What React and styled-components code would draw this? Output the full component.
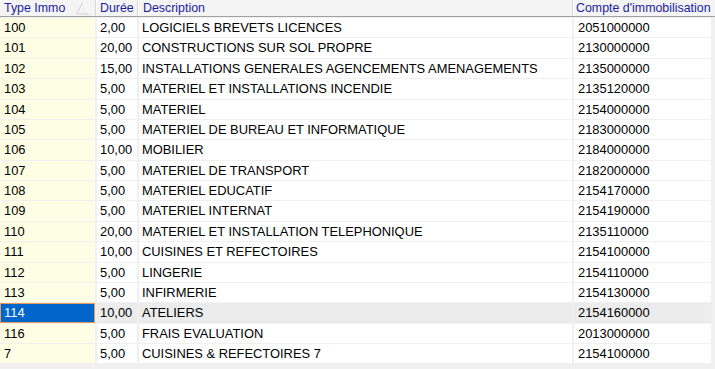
import React from "react";
import styled, { createGlobalStyle } from "styled-components";

const Global = createGlobalStyle`
  html, body { margin: 0; padding: 0; background: #f0f0f0; overflow: hidden; }
  body { font-family: "Liberation Sans", Arial, sans-serif; }
`;

const rows = [
  ["100", "2,00", "LOGICIELS BREVETS LICENCES", "2051000000"],
  ["101", "20,00", "CONSTRUCTIONS SUR SOL PROPRE", "2130000000"],
  ["102", "15,00", "INSTALLATIONS GENERALES AGENCEMENTS AMENAGEMENTS", "2135000000"],
  ["103", "5,00", "MATERIEL ET INSTALLATIONS INCENDIE", "2135120000"],
  ["104", "5,00", "MATERIEL", "2154000000"],
  ["105", "5,00", "MATERIEL DE BUREAU ET INFORMATIQUE", "2183000000"],
  ["106", "10,00", "MOBILIER", "2184000000"],
  ["107", "5,00", "MATERIEL DE TRANSPORT", "2182000000"],
  ["108", "5,00", "MATERIEL EDUCATIF", "2154170000"],
  ["109", "5,00", "MATERIEL INTERNAT", "2154190000"],
  ["110", "20,00", "MATERIEL ET INSTALLATION TELEPHONIQUE", "2135110000"],
  ["111", "10,00", "CUISINES ET REFECTOIRES", "2154100000"],
  ["112", "5,00", "LINGERIE", "2154110000"],
  ["113", "5,00", "INFIRMERIE", "2154130000"],
  ["114", "10,00", "ATELIERS", "2154160000"],
  ["116", "5,00", "FRAIS EVALUATION", "2013000000"],
  ["7", "5,00", "CUISINES & REFECTOIRES 7", "2154100000"],
];

const COLS = "95px 40px 433px 137px";

const Wrap = styled.div`
  width: 715px;
  height: 369px;
  background: #f0f0f0;
  overflow: hidden;
`;

const Header = styled.div`
  display: grid;
  grid-template-columns: 95px 2px 40px 2px 433px 2px 137px 1fr;
  height: 16px;
  background: #f4f4f4;
  border-bottom: 1px solid #a0a0a0;
`;

const HeadCell = styled.div`
  position: relative;
  color: #1c1c9c;
  font-size: 12.4px;
  line-height: 16px;
  padding-left: ${(p) => p.$pad || 3}px;
  white-space: nowrap;
  overflow: hidden;
`;

const HeadSep = styled.div`
  background: linear-gradient(to right, #d8d8d8 50%, #ffffff 50%);
`;

const SortIcon = styled.svg`
  position: absolute;
  right: 4px;
  top: 1px;
`;

const Body = styled.div`
  display: grid;
  grid-template-columns: ${COLS};
  grid-auto-rows: 19.375px;
  column-gap: 2px;
  row-gap: 1px;
  padding-top: 1px;
  width: 711px;
`;

const Cell = styled.div`
  background: ${(p) =>
    p.$active ? "#0066cc" : p.$key ? "#fefee4" : p.$sel ? "#ececec" : "#ffffff"};
  color: ${(p) => (p.$active ? "#ffffff" : "#000000")};
  border: ${(p) => (p.$active ? "1px solid #e89a50" : "none")};
  box-sizing: border-box;
  font-size: 12.9px;
  line-height: ${(p) => (p.$active ? "17.4px" : "19.4px")};
  padding-left: ${(p) => (p.$active ? p.$pad - 1 : p.$pad)}px;
  white-space: nowrap;
  overflow: hidden;
`;

export default function App() {
  return (
    <Wrap>
      <Global />
      <Header>
        <HeadCell $pad={4}>
          Type Immo
          <SortIcon width="16" height="14" viewBox="0 0 16 14">
            <path d="M8 1 L1.5 13 H14.5" fill="none" stroke="#d0d0d0" strokeWidth="1" />
            <path d="M8 1 L14.5 13" fill="none" stroke="#ffffff" strokeWidth="1" />
          </SortIcon>
        </HeadCell>
        <HeadSep />
        <HeadCell $pad={3}>Durée</HeadCell>
        <HeadSep />
        <HeadCell $pad={4}>Description</HeadCell>
        <HeadSep />
        <HeadCell $pad={2}>Compte d'immobilisation</HeadCell>
        <div />
      </Header>
      <Body>
        {rows.map((r) => {
          const sel = r[0] === "114";
          return (
            <React.Fragment key={r[0]}>
              <Cell $key $active={sel} $pad={4}>{r[0]}</Cell>
              <Cell $sel={sel} $pad={3}>{r[1]}</Cell>
              <Cell $sel={sel} $pad={3}>{r[2]}</Cell>
              <Cell $sel={sel} $pad={4}>{r[3]}</Cell>
            </React.Fragment>
          );
        })}
      </Body>
    </Wrap>
  );
}
